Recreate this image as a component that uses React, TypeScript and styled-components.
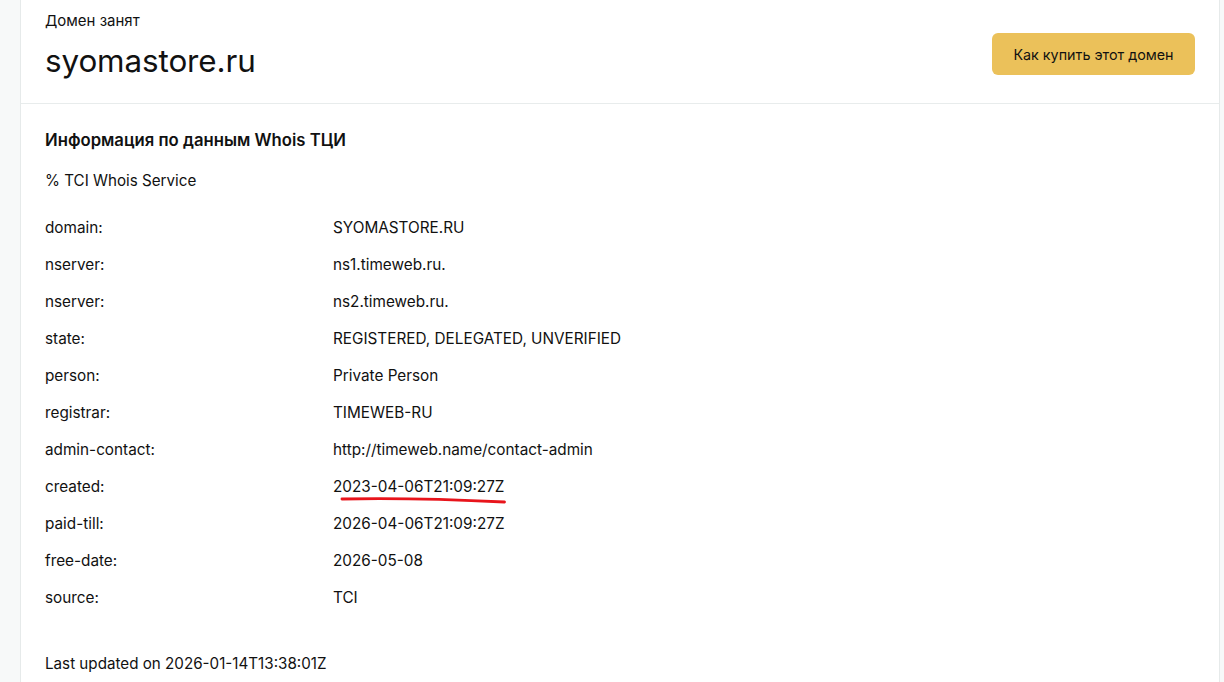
import React from 'react'
import styled, { createGlobalStyle } from 'styled-components'

const rows = [
  { label: 'domain:', value: 'SYOMASTORE.RU' },
  { label: 'nserver:', value: 'ns1.timeweb.ru.' },
  { label: 'nserver:', value: 'ns2.timeweb.ru.' },
  { label: 'state:', value: 'REGISTERED, DELEGATED, UNVERIFIED' },
  { label: 'person:', value: 'Private Person' },
  { label: 'registrar:', value: 'TIMEWEB-RU' },
  { label: 'admin-contact:', value: 'http://timeweb.name/contact-admin' },
  { label: 'created:', value: '2023-04-06T21:09:27Z', marked: true },
  { label: 'paid-till:', value: '2026-04-06T21:09:27Z' },
  { label: 'free-date:', value: '2026-05-08' },
  { label: 'source:', value: 'TCI' }
]

const App = () => {
  return (
    <>
      <GlobalStyle />
      <Page>
        <Card>
          <Header>
            <div>
              <Status>Домен занят</Status>
              <DomainName>syomastore.ru</DomainName>
            </div>
            <BuyButton>Как купить этот домен</BuyButton>
          </Header>
          <Body>
            <SectionTitle>Информация по данным Whois ТЦИ</SectionTitle>
            <ServiceLine>% TCI Whois Service</ServiceLine>
            <WhoisList>
              {rows.map((row, key) => (
                <WhoisRow key={key}>
                  <Label>{row.label}</Label>
                  <Value>
                    {row.value}
                    {row.marked && (
                      <Scribble viewBox="0 0 176 8" preserveAspectRatio="none">
                        <path d="M2 3 C 50 2, 110 3, 174 6" />
                      </Scribble>
                    )}
                  </Value>
                </WhoisRow>
              ))}
            </WhoisList>
            <Updated>Last updated on 2026-01-14T13:38:01Z</Updated>
          </Body>
        </Card>
      </Page>
    </>
  )
}

export default App

const GlobalStyle = createGlobalStyle`
  * { box-sizing: border-box; }
  body {
    margin: 0;
    background: #f7f9f9;
    font-family: Inter, "Liberation Sans", sans-serif;
    color: #111;
  }
`
const Page = styled.div`
  padding: 0 4px 0 20px;
  min-height: 682px;
`
const Card = styled.div`
  background: #fff;
  border-left: 1px solid #e6eaea;
  border-right: 1px solid #e6eaea;
  min-height: 682px;
`
const Header = styled.div`
  display: flex;
  justify-content: space-between;
  align-items: flex-start;
  padding: 11px 24px 24px 24px;
  border-bottom: 1px solid #e8ecec;
`
const Status = styled.div`
  font-size: 15px;
  line-height: 20px;
`
const DomainName = styled.div`
  margin-top: 12px;
  font-size: 31.4px;
  line-height: 36px;
  letter-spacing: -0.1px;
`
const BuyButton = styled.button`
  margin-top: 22px;
  width: 203px;
  height: 42px;
  border: none;
  border-radius: 6px;
  background: #ebc15a;
  color: #111;
  font-family: inherit;
  font-size: 14.3px;
  cursor: pointer;
`
const Body = styled.div`
  padding: 25px 24px 20px 24px;
`
const SectionTitle = styled.div`
  font-size: 16.7px;
  font-weight: 600;
  line-height: 22px;
`
const ServiceLine = styled.div`
  margin-top: 19px;
  font-size: 15.2px;
  line-height: 22px;
`
const WhoisList = styled.div`
  margin-top: 17px;
`
const WhoisRow = styled.div`
  display: grid;
  grid-template-columns: 288px 1fr;
  height: 37px;
  align-items: center;
  font-size: 15.3px;
`
const Label = styled.div``
const Value = styled.div`
  position: relative;
  justify-self: start;
`
const Scribble = styled.svg`
  position: absolute;
  left: 7px;
  bottom: -8px;
  width: calc(100% - 5px);
  height: 8px;
  fill: none;
  stroke: #e8141b;
  stroke-width: 2.8;
  stroke-linecap: round;
`
const Updated = styled.div`
  margin-top: 37px;
  font-size: 15.2px;
  line-height: 22px;
`
